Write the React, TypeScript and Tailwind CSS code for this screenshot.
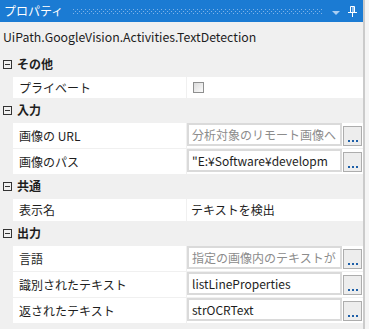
import React from "react";

const font = { fontFamily: '"Noto Sans CJK JP", "Noto Sans", sans-serif' };

type Prop = {
    label: string,
    kind: "text" | "box" | "check",
    value?: string,
    placeholder?: boolean,
};

type Group = { title: string, rows: Prop[] };

const groups: Group[] = [
    { title: "その他", rows: [{ label: "プライベート", kind: "check" }] },
    {
        title: "入力", rows: [
            { label: "画像の URL", kind: "box", value: "分析対象のリモート画像へ", placeholder: true },
            { label: "画像のパス", kind: "box", value: "\"E:¥Software¥developm" },
        ]
    },
    { title: "共通", rows: [{ label: "表示名", kind: "text", value: "テキストを検出" }] },
    {
        title: "出力", rows: [
            { label: "言語", kind: "box", value: "指定の画像内のテキストが", placeholder: true },
            { label: "識別されたテキスト", kind: "box", value: "listLineProperties" },
            { label: "返されたテキスト", kind: "box", value: "strOCRText" },
        ]
    },
];

const Collapse = () => (
    <svg width="9" height="9" viewBox="0 0 9 9" className="shrink-0">
        <rect x="0.5" y="0.5" width="8" height="8" fill="none" stroke="#333" />
        <line x1="2" y1="4.5" x2="7" y2="4.5" stroke="#333" />
    </svg>
);

const Row: React.FC<{ prop: Prop }> = ({ prop }) => {
    const tall = prop.kind === "box";
    return (
        <div className={"flex border-t border-[#f0f0f0] pl-[13px] " + (tall ? "h-[26px]" : prop.kind === "check" ? "h-[22px]" : "h-[23px]")}>
            <div className="w-[173px] bg-white flex items-center pl-[6px] text-[12px] text-[#1e1e1e]">
                {prop.label}
            </div>
            <div className="w-[1px] bg-[#f0f0f0]" />
            <div className="flex-1 bg-white flex items-start">
                {prop.kind === "check" && (
                    <div className="mt-[5px] ml-[6px] w-[11px] h-[11px] border border-[#8e8f8f] bg-gradient-to-br from-[#dcdcdc] to-[#fbfbfb]" />
                )}
                {prop.kind === "text" && (
                    <div className="h-full flex items-center pl-[4px] text-[12px] text-[#1e1e1e]">{prop.value}</div>
                )}
                {prop.kind === "box" && (
                    <>
                        <div className={"h-[23px] w-[155px] border-2 border-[#dadada] bg-white flex items-center pl-[3px] overflow-hidden whitespace-nowrap text-[12px] " + (prop.placeholder ? "text-[#8c8c8c]" : "text-[#1e1e1e]")}>
                            {prop.value}
                        </div>
                        <div className="ml-[1px] mt-[3px] h-[20px] w-[19px] border border-[#adadad] bg-[#ededed] flex items-end justify-center pb-[3px]">
                            <div className="flex gap-[2px]">
                                <span className="w-[2px] h-[2px] bg-[#1d5fa8]" />
                                <span className="w-[2px] h-[2px] bg-[#1d5fa8]" />
                                <span className="w-[2px] h-[2px] bg-[#1d5fa8]" />
                            </div>
                        </div>
                    </>
                )}
            </div>
        </div>
    );
};

export default function App() {
    return (
        <div className="w-[369px] h-[329px] flex bg-[#f5f5f5] overflow-hidden" style={font}>
            <div className="w-[363px] flex flex-col bg-[#f0f0f0]">
                <div className="h-[22px] shrink-0 bg-[#1b7bd3] flex items-center pl-[4px]">
                    <span className="shrink-0 whitespace-nowrap text-white text-[12px] leading-[22px] h-[22px]">プロパティ</span>
                    <svg className="ml-[10px] shrink-0" width="250" height="5" viewBox="0 0 250 5">
                        <defs>
                            <pattern id="dots" width="4" height="4" patternUnits="userSpaceOnUse">
                                <rect x="0" y="0" width="1" height="1" fill="#7fb3e8" />
                                <rect x="2" y="2" width="1" height="1" fill="#7fb3e8" />
                            </pattern>
                        </defs>
                        <rect width="250" height="5" fill="url(#dots)" />
                    </svg>
                    <svg className="ml-[9px] mt-[4px] shrink-0" width="8" height="5" viewBox="0 0 8 5">
                        <path d="M0 0 H8 L4 4 Z" fill="#a9cdf2" />
                    </svg>
                    <svg className="ml-[8px] shrink-0" width="9" height="11" viewBox="0 0 9 11">
                        <path d="M2.5 0.5 H6.5 V6.5 H2.5 Z M5 1 V6" fill="none" stroke="#ffffff" />
                        <path d="M0 6.5 H9" stroke="#ffffff" />
                        <path d="M4.5 7 V11" stroke="#ffffff" />
                    </svg>
                </div>
                <div className="h-[30px] shrink-0 flex items-center pl-[3px] text-[12.3px] text-[#1e1e1e]">
                    UiPath.GoogleVision.Activities.TextDetection
                </div>
                {groups.map((g) => (
                    <div key={g.title} className="shrink-0">
                        <div className="h-[24px] flex items-center pl-[3px] gap-[5px]">
                            <Collapse />
                            <span className="text-[12px] font-bold text-[#1e1e1e]">{g.title}</span>
                        </div>
                        {g.rows.map((r) => (
                            <Row key={r.label} prop={r} />
                        ))}
                    </div>
                ))}
            </div>
            <div className="w-[2px] bg-[#cbcbcb]" />
            <div className="flex-1" />
        </div>
    );
}
